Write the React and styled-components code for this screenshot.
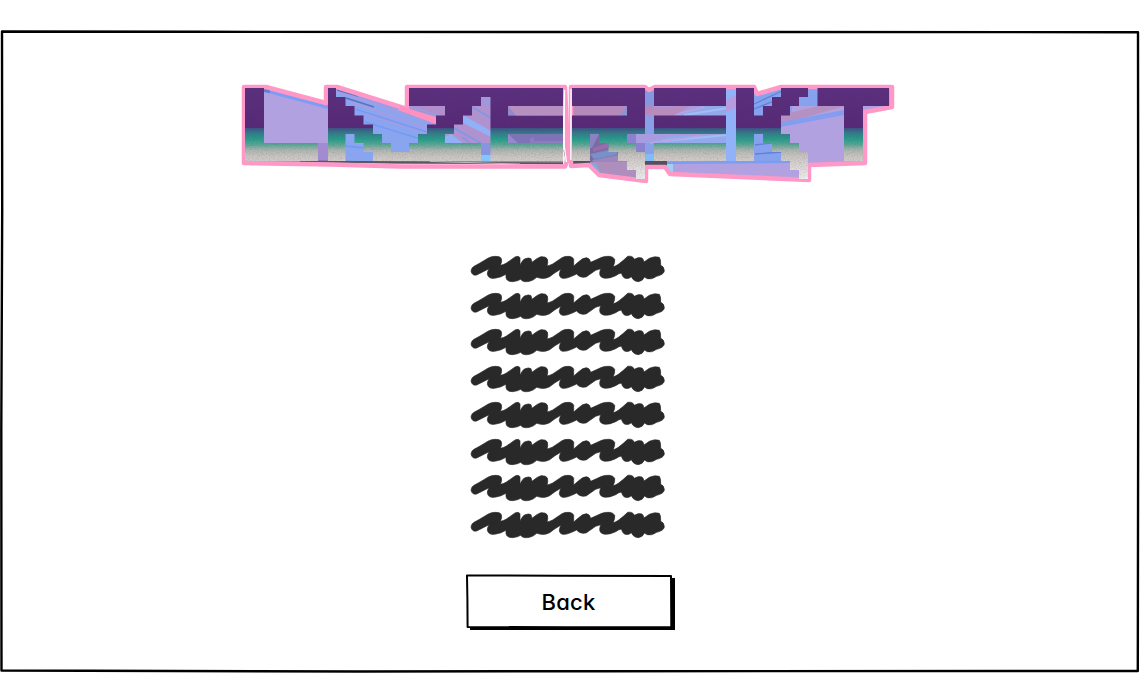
import React from 'react';
import styled, { createGlobalStyle } from 'styled-components';

const GlobalStyle = createGlobalStyle`
  * { box-sizing: border-box; }
  body { margin: 0; background: #fff; overflow: hidden; }
`;

const Page = styled.main`
  height: 673px;
  padding-top: 30px;
`;

const Panel = styled.section`
  position: relative;
  height: 643px;
  display: flex;
  flex-direction: column;
  align-items: center;
  padding-top: 50px;
`;

const Outline = styled.svg`
  position: absolute;
  inset: 0;
  width: 100%;
  height: 100%;
  overflow: visible;
  pointer-events: none;
  fill: none;
  stroke: #000;
  stroke-linejoin: round;
`;

const Logo = styled.svg`
  display: block;
  width: 660px;
  height: 108px;
  margin-right: 4px;
`;

const List = styled.ul`
  list-style: none;
  margin: 62px 4px 0 0;
  padding: 0;
  display: flex;
  flex-direction: column;
`;

const Item = styled.li`
  height: 36.5px;
`;

const Scribble = styled.svg`
  display: block;
  width: 204px;
  height: 36px;
  fill: #292929;
  stroke: #292929;
  stroke-width: 2;
  stroke-linejoin: round;
`;

const BackButton = styled.button`
  position: relative;
  width: 205px;
  height: 52px;
  margin: 33px 1px 0 0;
  padding: 1px 2px 0 0;
  border: 0;
  background: #fff;
  box-shadow: 3px 3px 0 #000;
  color: #000;
  font: 450 22px 'Inter', sans-serif;
  font-feature-settings: 'cv11' 1, 'ss03' 1;
  letter-spacing: 0.2px;
`;

const LETTERS = [
  // L
  'M245 88H264V143H318V161H245Z',
  // A joined to Z and E along the baseline
  'M328 88H336V97H345.5V106H354.5V115.5H363.5V124.5H373V134H382V143H391V152H409V143H418V134H427V124.5H436V115.5H445V106H409V88H563V106H508V115.5H563V134H508V143H563V161H490.5V97H481V106H472V115.5H463V124.5H454V134H445V143H481V161H373V152H363.5V143H354.5V134H345.5V161H328Z',
  // R
  'M572 88H645V134H627V143H636V152H645V179H636V170H627V161H618V152H608.5V143H599.5V134H590V161H572V115.5H627V106H572Z',
  // E
  'M654 88H726V106H654ZM654 115.5H726V134H654ZM654 143H726V161H654Z',
  // K
  'M736 88H754V115.5H763V106H772V97H781V88H808V97H799V106H790V115.5H781V134H790V143H799V152H808V179H799V170H790V161H781V152H772V143H763V134H754V161H736Z',
  // T
  'M817.5 88H889V106H863V161H844V106H817.5Z',
].join('');

const LEFT_BLOCK =
  'M244 87L266 87L326 103L326 87L337 87L407 109L407 87L565 87L567 130L567.5 160L565 166.500L400 166.500L330 164.500L244 163Z';
const RIGHT_BLOCK =
  'M571 87H645L649 90L655 87H754L757 94L781 87H892V107L865 112V163L809 165V180L670 174L665 167H646V181L599 175L589 165L571 166Z';

function LogoMark() {
  return (
    <Logo viewBox="238 80 660 108" role="img" aria-label="LAZEREKT">
      <defs>
        <linearGradient id="face" gradientUnits="userSpaceOnUse" x1="0" y1="88" x2="0" y2="180">
          <stop offset="0" stopColor="#5c2f80" />
          <stop offset=".43" stopColor="#572978" />
          <stop offset=".435" stopColor="#3e5287" />
          <stop offset=".49" stopColor="#347c8a" />
          <stop offset=".56" stopColor="#28a08e" />
          <stop offset=".61" stopColor="#55a795" />
          <stop offset=".68" stopColor="#b1b8b2" />
          <stop offset=".74" stopColor="#cbc6c3" />
          <stop offset="1" stopColor="#f2f2f2" />
        </linearGradient>
        <filter id="grain" x="0" y="0" width="1" height="1" colorInterpolationFilters="sRGB">
          <feTurbulence type="fractalNoise" baseFrequency=".75" numOctaves="2" seed="4" />
          <feColorMatrix values="0 0 0 0 .3  0 0 0 0 .25  0 0 0 0 .3  .35 0 0 0 -.13" />
          <feComposite in2="SourceGraphic" operator="in" result="specks" />
          <feMerge>
            <feMergeNode in="SourceGraphic" />
            <feMergeNode in="specks" />
          </feMerge>
        </filter>
        <clipPath id="left"><path d={LEFT_BLOCK} /></clipPath>
        <clipPath id="right"><path d={RIGHT_BLOCK} /></clipPath>
      </defs>

      <g clipPath="url(#left)">
        <path fill="#b2a1e1" d="M244 86H328V162H244Z" />
        <path fill="#7f9cf5" d="M264 88L328 105V109L264 92Z" />
        <path fill="#5f7fcb" d="M264 88L270 90V93L264 92Z" />
        <path fill="#a28bd3" d="M318 143H328V161H318Z" />
        <path fill="#8aa5f0" d="M328 86L445 115V162H328Z" />
        <path stroke="#a29de3" strokeWidth="2.5" d="M336 91L436 124M350 102L432 130M366 114L430 134" />
        <path stroke="#759af5" strokeWidth="1.8" d="M336 89L434 119M355 109L430 133M365 122L424 140M345 146L365 148" />
        <path stroke="#5376c1" strokeWidth="1.7" d="M337 90L358 96M346 98L374 107" />
        <path fill="#b18fcc" d="M409 106H445V115.5H409Z" />
        <path stroke="#8fa2e7" strokeWidth="1.5" d="M410 107L440 116" />
        <path fill="#b092cf" d="M445 96H491V162H445Z" />
        <path fill="#92b0f5" d="M463 115L491 131V137L461 122ZM445 137L451 134L463 143H445Z" />
        <path stroke="#8197e5" strokeWidth="2" d="M472 107L491 118M454 128L491 149M462 137L470 143" />
        <path fill="#9f99dc" d="M481 97H491V107L481 103Z" />
        <path fill="#8795e0" d="M481 143H491V155H481Z" />
        <path fill="#80c6ff" d="M481 155H491V161H481Z" />
        <path fill="#b790c2" d="M508 106H563V115.5H508Z" />
        <path fill="#7f73b8" d="M508 134H563V143H508Z" />
        <path fill="#9389cb" d="M508 106L516 115.5H508ZM508 134L518 143H508Z" />
        <path fill="#8d7cbf" d="M530 139L534 137V141H563V143H530Z" />
        <path fill="#f9eef8" d="M563 88H570V166H563Z" />
        <path fill="#a18e9f" d="M245 161H563V164H400Z" />
        <path stroke="#5d555f" strokeWidth="1.8" d="M300 161.5L563 163.5" />
        <path stroke="#bfb9bf" d="M430 161.5L520 164" />
        <path stroke="#6a6478" d="M564 150L567 165" />
      </g>

      <g clipPath="url(#right)">
        <path fill="#b2a1e1" d="M571 86H893V182H571Z" />
        <path fill="#b48abd" d="M571 106H655V115.5H571Z" />
        <path fill="#8a94d6" d="M620 115.5L627 106V115.5Z" />
        <path fill="#7a6ba3" d="M590 134H627V163H590Z" />
        <path fill="#8a83c3" d="M590 134H599L592 148H590Z" />
        <path fill="#9a6caa" d="M593 148L608 143V148L593 152Z" />
        <path fill="#7d8fcb" d="M590 154L617 149V155L594 159Z" />
        <path fill="#9d86be" d="M592 160L620 155L627 161V163H594Z" />
        <path fill="#ad8ebd" d="M590 162H636V180H598Z" />
        <path stroke="#6f8fbd" strokeWidth="1" d="M593 154L616 148M594 160L618 154" />
        <path fill="#83a9dd" d="M590 163L596 163L600 172L595 172Z" />
        <path fill="#8b82cf" d="M627 134H654V152H636V143H627Z" />
        <path fill="#8498e0" d="M645 88H654V106H645Z" />
        <path fill="#8aa0e6" d="M645 115H654V162H645Z" />
        <path fill="#80bdf8" d="M645 154H654V162H645Z" />
        <path fill="#a99be0" d="M654 106H737V116H654ZM636 134H737V143H636Z" />
        <path fill="#94a9ec" d="M672 116L700 107L737 104V116ZM642 143L674 136L737 134V143Z" />
        <path stroke="#a2bdf5" strokeWidth="2" d="M684 115L728 108M662 141L728 135" />
        <path stroke="#baa4e4" strokeWidth="1.5" d="M674 115L704 107M650 143L700 136" />
        <path fill="#ba8cbd" d="M645 116L655 107L690 106L674 115.5Z" />
        <path fill="#91b2f8" d="M726 87H736V162H726Z" />
        <path fill="#b59ddf" d="M726 100L736 95V108L726 112Z" />
        <path fill="#86a2ef" d="M754 87H792V116H754ZM754 134H781V161H754ZM799 87H818V106H781V112Z" />
        <path stroke="#5f82d5" strokeWidth="1.3" d="M754 104L782 91M754 109L779 99M755 145L772 143M755 154L782 152" />
        <path fill="#b491c0" d="M781 115L818 106H845L781 124Z" />
        <path fill="#839df1" d="M781 122L844 110V115L781 127Z" />
        <path fill="#574f60" d="M571 161H590V164H571ZM645 161H667V165H645Z" />
        <path fill="#7c9df0" d="M667 161.500L790 160.500V163L667 164Z" />
        <path fill="#9fd1f8" d="M667 164H673V173L667 169Z" />
      </g>

      <g fill="none" stroke="#ff98c6" strokeWidth="4.5" strokeLinejoin="round">
        <path d={LEFT_BLOCK} />
        <path d={RIGHT_BLOCK} />
      </g>
      <path fill="#ff91c1" d="M400 106L436 117V124L398 110Z" />
      <path d={LETTERS} fill="url(#face)" filter="url(#grain)" />
      <path fill="none" stroke="#fff" strokeWidth="1.3" d="M564.5 90L564 145L566.500 162M571 89L570.800 160" />
    </Logo>
  );
}

const SCRIBBLE_PATH =
  'M33 64Q33 55 42 50L60 40L85 25Q94 20 105 20Q119 19 123 25Q128 34 121 47Q131 45 138 41L165 22Q177 17 180 25V46Q187 32 193 28Q207 22 213 27L216 38Q232 24 243 21Q258 20 262 28Q265 38 261 49Q270 47 278 43L306 24Q315 19 327 20Q344 23 341 35V49L355 37Q368 24 380 24Q390 26 392 38L425 23Q436 19 449 20Q460 21 464 29Q466 38 459 51Q467 50 475 44L490 32L503 20Q518 17 523 29Q535 21 546 25Q551 29 552 37L568 26Q584 18 598 23Q603 30 602 47Q613 51 613 64Q611 75 590 80Q575 91 562 87L553 82Q549 94 535 96Q520 95 514 81Q505 90 493 85Q487 81 484 70Q475 72 467 78Q451 86 437 86Q420 85 419 72Q419 65 422 57L407 62L388 75Q379 84 369 83Q356 82 350 73L335 80Q320 87 308 86Q297 83 298 72L302 59L285 69L269 81Q257 88 243 86L230 83Q222 91 209 95Q188 99 182 89Q174 94 158 96Q139 96 138 83V74Q123 83 108 85Q86 90 82 74Q82 65 87 57L68 67L50 76Q36 79 33 64Z';

const ROWS = [0, 1, 2, 3, 4, 5, 6, 7];

export default function App() {
  return (
    <>
      <GlobalStyle />
      <Page>
        <Panel>
          <Outline viewBox="0 0 1140 643" strokeWidth="2.4">
            <path d="M2 1.5L200 1.8L570 2L1138 2.2L1138.3 300L1137.8 641L600 641.2L360 641.5L1.5 640.5L1.3 400L2.2 180Z" />
          </Outline>
          <LogoMark />
          <List>
            {ROWS.map((row) => (
              <Item key={row}>
                <Scribble viewBox="18 1 612 108"><path d={SCRIBBLE_PATH} /></Scribble>
              </Item>
            ))}
          </List>
          <BackButton type="button">
            Back
            <Outline viewBox="0 0 205 52" strokeWidth="2">
              <path d="M0 .4L90 .7L204 1L204.3 52L100 52.3L.6 52L.4 24Z" />
            </Outline>
          </BackButton>
        </Panel>
      </Page>
    </>
  );
}
